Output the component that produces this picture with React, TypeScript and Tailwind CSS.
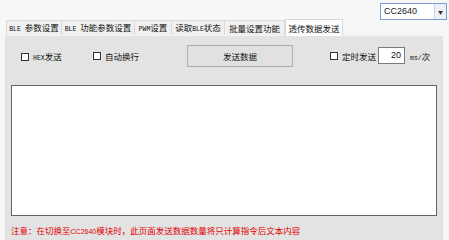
import * as React from "react";

const tabs: [string, string][] = [
  ["BLE 参数设置", "w-[56px]"],
  ["BLE 功能参数设置", "w-[73px]"],
  ["PWM设置", "w-[37px]"],
  ["读取BLE状态", "w-[53px]"],
  ["批量设置功能", "w-[60px]"],
  ["透传数据发送", "w-[58px]"],
];

// small latin runs look like a tiny bitmap font in the original
function Mix({ text }: { text: string }) {
  const parts = text.split(/([A-Za-z0-9/ ]+)/).filter(Boolean);
  return (
    <span className="whitespace-pre">
      {parts.map((p, i) =>
        /^[A-Za-z0-9/ ]+$/.test(p) ? (
          <span key={i} className="text-[6.5px]" style={{ fontFamily: '"Liberation Mono", monospace' }}>
            {p}
          </span>
        ) : (
          <span key={i}>{p}</span>
        )
      )}
    </span>
  );
}

function Check({ label, className = "" }: { label: string; className?: string }) {
  return (
    <label className={`flex shrink-0 items-center gap-[4px] whitespace-nowrap ${className}`}>
      <span className="block size-[8px] border border-[#333] bg-white" />
      <Mix text={label} />
    </label>
  );
}

export default function App() {
  const active = 5;
  return (
    <div
      className="flex h-[240px] w-[449px] flex-col overflow-hidden bg-[#f7f7f7] text-[8.5px] leading-none text-[#111]"
      style={{ fontFamily: '"Noto Sans CJK SC", "Noto Sans", sans-serif' }}
    >
      <div className="flex h-[20px] shrink-0 items-start justify-end pr-[2px] pt-[3px]">
        <div className="flex h-[17px] w-[67px] border border-[#7a9ed8] bg-white">
          <span className="flex flex-1 items-center pl-[3px] text-[9px] text-[#222]" style={{ fontFamily: '"Liberation Sans", sans-serif' }}>
            CC2640
          </span>
          <span className="flex w-[12px] items-center justify-center border-l border-[#c9d6ea] bg-[#eef2f8] text-[5px] text-[#333]">▼</span>
        </div>
      </div>
      <div className="flex h-[15px] shrink-0 items-end pl-[6px]">
        {tabs.map(([t, w], i) => (
          <div
            key={t}
            className={
              i === active
                ? `${w} relative z-10 mb-[-1px] flex h-[17px] shrink-0 items-center justify-center whitespace-nowrap border border-b-0 border-[#d9d9d9] bg-white`
                : `${w} flex h-[15px] shrink-0 items-center justify-center whitespace-nowrap border border-b-0 border-l-0 border-[#d9d9d9] bg-[#f0f0f0] first:border-l`
            }
          >
            <Mix text={t} />
          </div>
        ))}
      </div>
      <div className="ml-[4px] mr-[5px] flex flex-1 flex-col border-l border-r border-t border-[#f3f3f3] bg-[#e3e3e3] px-[6px]">
        <div className="flex h-[49px] shrink-0 items-start pt-[9px]">
          <Check label="HEX发送" className="ml-[10px] mt-[7px] w-[72px]" />
          <Check label="自动换行" className="mt-[7px] w-[94px]" />
          <button className="h-[22px] w-[106px] shrink-0 border border-[#adadad] bg-[#e1e1e1] text-[8.5px]">发送数据</button>
          <Check label="定时发送" className="ml-[37px] mt-[7px] w-[48px]" />
          <span
            className="mt-[2px] flex h-[17px] w-[27px] shrink-0 items-center justify-end border border-[#7a7a7a] bg-white pr-[3px] text-[9px]"
            style={{ fontFamily: '"Liberation Sans", sans-serif' }}
          >
            20
          </span>
          <span className="ml-[5px] mt-[7px] whitespace-nowrap">
            <Mix text="ms/次" />
          </span>
        </div>
        <div className="h-[131px] shrink-0 border border-[#646464] bg-white" />
        <div className="whitespace-nowrap pt-[10px] text-[#e00000]">
          注意：在切换至<span className="text-[7px]" style={{ fontFamily: '"Liberation Sans Narrow", "Liberation Sans", sans-serif' }}>CC2640</span>模块时，此页面发送数据数量将只计算指令后文本内容
        </div>
      </div>
    </div>
  );
}
